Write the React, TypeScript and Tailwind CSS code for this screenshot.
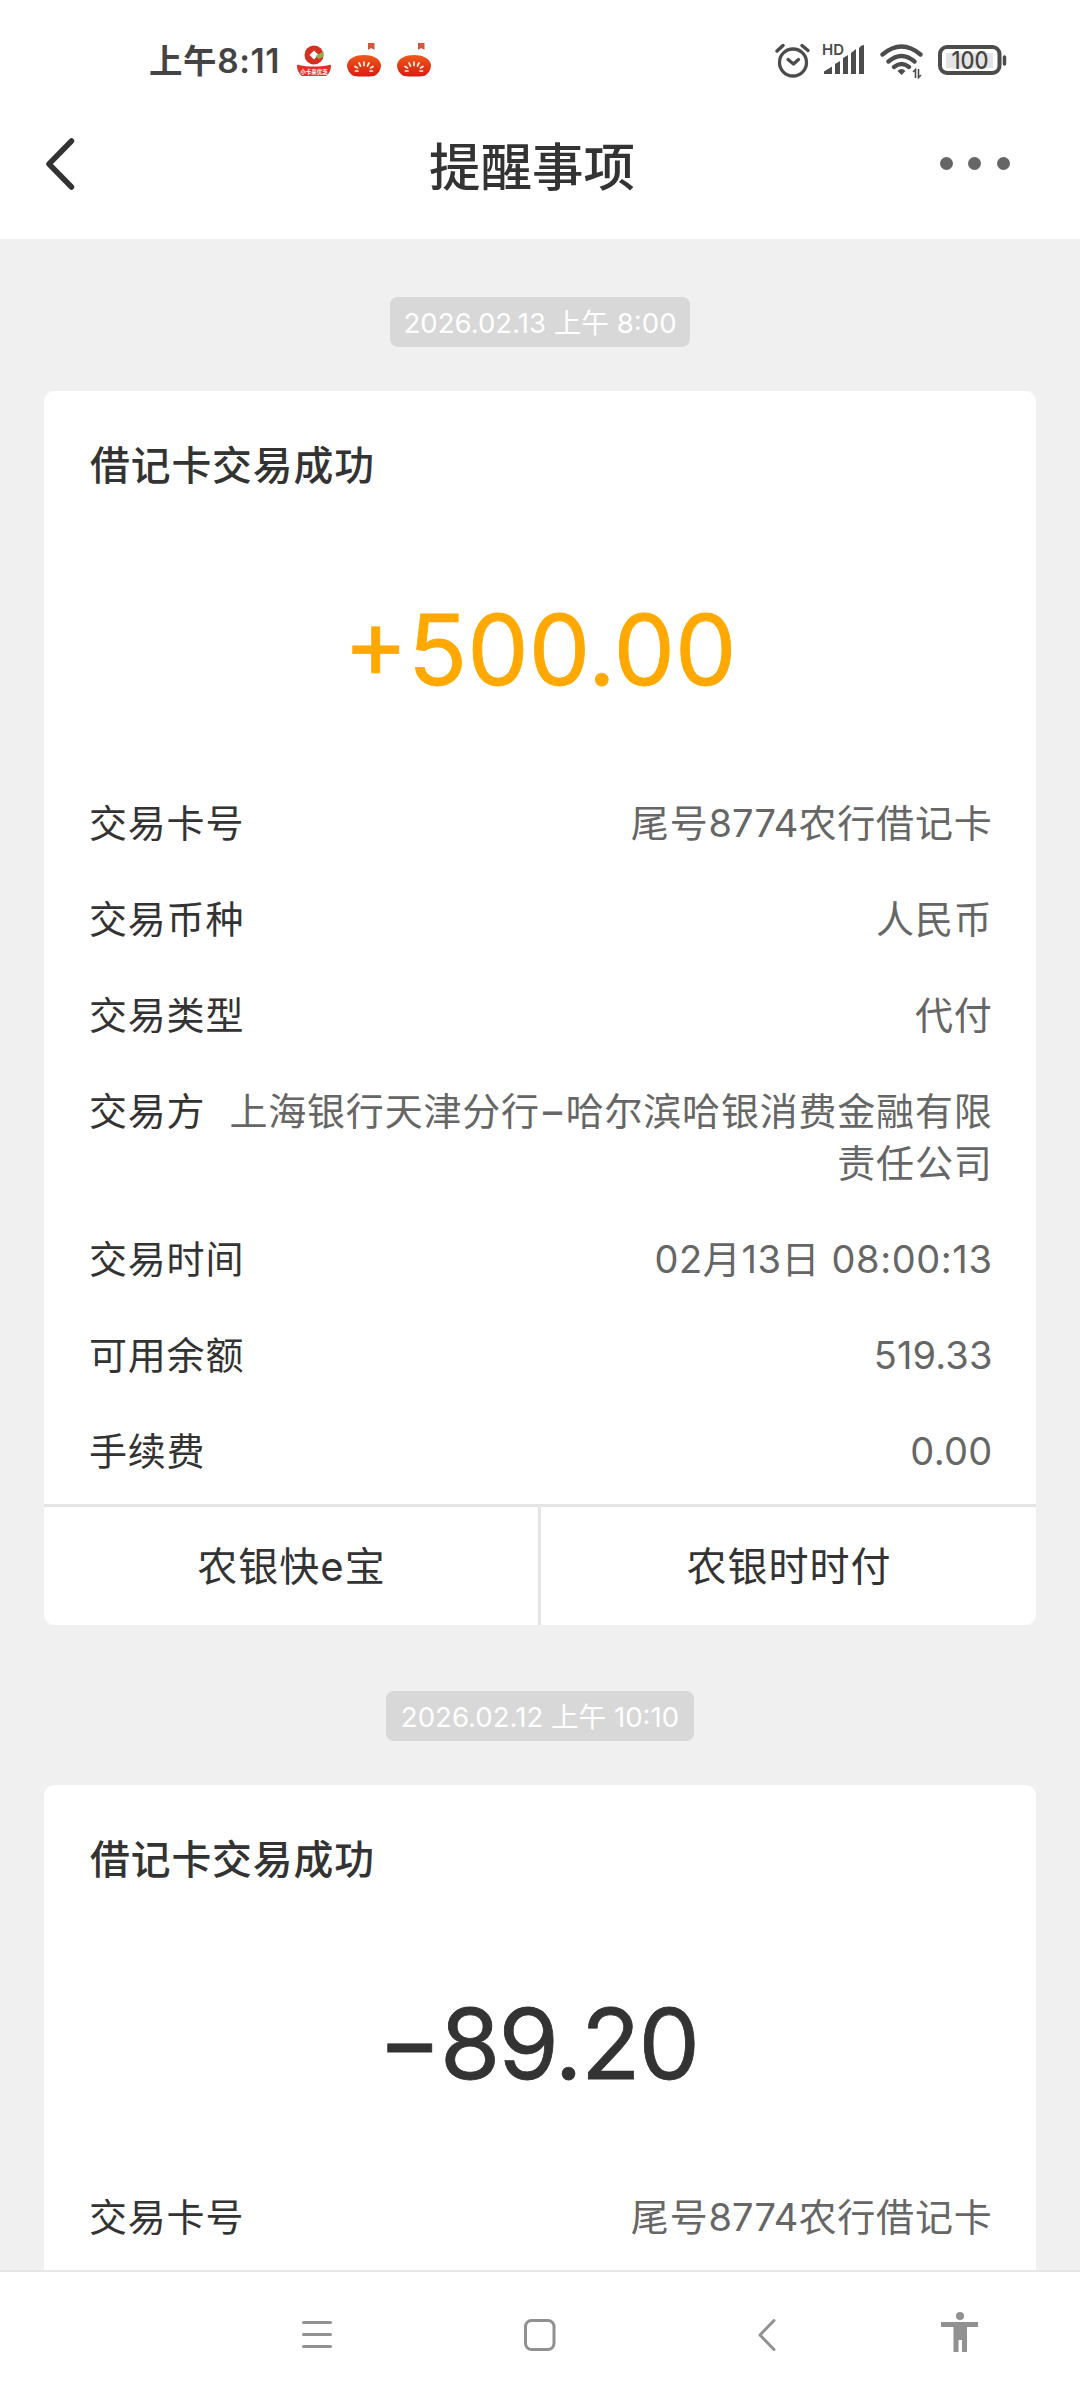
import React from 'react';

type Row = { label: string; value: React.ReactNode };

function Pill({ children, width }: { children: string; width: string }) {
  return (
    <div className={`mx-auto flex h-[50px] items-center justify-center rounded-[8px] bg-[#d8d8d8] pt-[3px] text-[27.6px] leading-none whitespace-pre text-white ${width}`}>
      {children}
    </div>
  );
}

function Card({ amount, amountClass, rows, actions }: { amount: React.ReactNode; amountClass: string; rows: Row[]; actions: string[] }) {
  return (
    <section className="mx-[44px] flex flex-col overflow-hidden rounded-[10px] bg-white text-[#333]">
      <h2 className="px-[46px] pt-[45px] text-[39.8px] leading-[60px] font-medium tracking-[0.9px]">借记卡交易成功</h2>
      <div className={amountClass}>{amount}</div>
      <dl className="flex flex-col gap-[44px] pr-[43.5px] pb-[27px] pl-[45px] text-[38px] leading-[52px] tracking-[0.8px]">
        {rows.map((r) => (
          <div key={r.label} className="flex justify-between gap-[16px]">
            <dt className="shrink-0">{r.label}</dt>
            <dd className="text-right text-[#666]">{r.value}</dd>
          </div>
        ))}
      </dl>
      <div className="grid h-[121px] grid-cols-[497px_495px] border-t-[3px] border-[#e5e5e5] text-[40px] tracking-[1px]">
        {actions.map((a, i) => (
          <button key={a} className={i === 0 ? 'border-r-[3px] border-[#e5e5e5] pt-[2px] pl-px' : 'pt-[2px] pl-px'}>
            {a}
          </button>
        ))}
      </div>
    </section>
  );
}

function TomatoIcon() {
  return (
    <svg width="36" height="36" viewBox="0 0 36 36">
      <defs>
        <linearGradient id="tomato" x1="0" y1="0" x2="0" y2="1">
          <stop offset="0" stopColor="#ee5a1c" />
          <stop offset="1" stopColor="#d91c12" />
        </linearGradient>
      </defs>
      <path d="M22 0h6.500v7l-3.300-2-3.200 2z" fill="#d2583c" />
      <path d="M1 22C2 15 10 12 18 12s16 3 17 10c0 5-3 9-7 11-6 .8-14 .8-20 0-4-2-7-6-7-11z" fill="url(#tomato)" />
      <g stroke="#fff3dc" strokeWidth="1.700" strokeLinecap="round">
        <path d="M18 19v3.500M13 20l1.500 3M23 20l-1.500 3M9 23.500l2.500 1.500M27 23.500L24.500 25M9.500 28h2.500M24 28h2.500" />
      </g>
    </svg>
  );
}

function BankIcon() {
  return (
    <svg width="36" height="36" viewBox="0 0 36 36">
      <circle cx="18" cy="12" r="9.500" fill="#d4301f" />
      <path d="M18 7.500l4.500 4.500-4.500 4.500-4.500-4.500z" fill="#fff" />
      <path d="M19.500 13l8-4.500v5l-4.500 2.500z" fill="#8fb04a" />
      <path d="M1 23c0-1.500 1-1.500 2-1 8 2 22 2 30 0 1-.5 2-.5 2 1 0 4-2 8-5 10H6c-3-2-5-6-5-10z" fill="#e02f28" />
      <text x="18" y="31" fontSize="5.500" fontWeight="700" textAnchor="middle" fill="#fff">小卡来优惠</text>
    </svg>
  );
}

function StatusBar() {
  return (
    <div className="flex h-[122px] items-center pr-[73px] pl-[149px] text-[#444]">
      <span className="text-[33.5px] font-semibold tracking-[0.6px]">上午8:11</span>
      <div className="ml-[16px] flex gap-[14px]">
        <BankIcon />
        <TomatoIcon />
        <TomatoIcon />
      </div>
      <svg className="ml-auto" width="234" height="40" viewBox="0 0 234 40" fill="none" stroke="#4c4c4c">
        <circle cx="20" cy="21.500" r="13.500" strokeWidth="3.300" />
        <path d="M15 18.500l5.500 4.500 5-4.500" strokeWidth="3.300" strokeLinecap="round" strokeLinejoin="round" />
        <path d="M4 10l6-5.500M35 9.500l-6-5" strokeWidth="3.500" strokeLinecap="round" />
        <text x="49" y="14" fontSize="15" fontWeight="600" fill="#4c4c4c" stroke="none">HD</text>
        <g fill="#4c4c4c" stroke="none">
          <path d="M51 33v-2.500l8-5V33zM62 33V23l5-3v13zM70 33V17l5-3v19zM78 33V12l5-4v25zM86 33V7q2-3 5-3v29z" />
          <path d="M124.500 30q4-4 8 0l-4 4z" />
        </g>
        <path d="M109.500 13.500q19-16 38 0M115.500 20.500q13-11 26 0M121 26q7.500-6 15 0" strokeWidth="4.300" strokeLinecap="round" />
        <path d="M140 31l2.500-2.500V37M148 34l-2.500 2.500V28" strokeWidth="1.600" />
        <rect x="173" y="12" width="47" height="15" fill="#e4e4e4" stroke="none" />
        <rect x="167" y="6" width="59.500" height="26" rx="7" strokeWidth="4" />
        <path d="M231.500 16v7" strokeWidth="3.500" strokeLinecap="round" />
        <text x="178.500" y="28" fontSize="24" fontWeight="500" textLength="37" lengthAdjust="spacingAndGlyphs" fill="#444" stroke="none">100</text>
      </svg>
    </div>
  );
}

export default function App() {
  const cardRow: Row = {
    label: '交易卡号',
    value: <>尾号<span className="tracking-[0.1px]">8774</span>农行借记卡</>,
  };
  const rows: Row[] = [
    cardRow,
    { label: '交易币种', value: '人民币' },
    { label: '交易类型', value: '代付' },
    {
      label: '交易方',
      value: <>上海银行天津分行<span className="px-[3px] text-[38px] leading-none font-medium">–</span>哈尔滨哈银消费金融有限责任公司</>,
    },
    { label: '交易时间', value: <span className="tracking-[0.6px]">02月13日 08:00:13</span> },
    { label: '可用余额', value: <span className="tracking-[0.1px]">519.33</span> },
    { label: '手续费', value: <span className="tracking-[0.3px]">0.00</span> },
  ];

  return (
    <div className="flex h-[2400px] w-[1080px] flex-col overflow-hidden bg-[#f0f0f0] font-[Inter,'Noto_Sans_CJK_SC',sans-serif]">
      <div className="shrink-0 bg-white">
        <StatusBar />
        <header className="flex h-[117px] items-start justify-between pr-[70px] pl-[43px] text-[#333]">
          <svg className="mt-[15px]" width="36" height="56" viewBox="0 0 36 56" fill="none" stroke="#333" strokeWidth="5.500">
            <path d="M28.500 4L6 27l22.500 23" strokeLinecap="round" strokeLinejoin="round" />
          </svg>
          <h1 className="pt-px pl-[45px] text-[51.500px] leading-[88px] font-medium">提醒事项</h1>
          <div className="mt-[35px] flex gap-[15.500px]">
            <i className="size-[13px] rounded-full bg-[#666]" />
            <i className="size-[13px] rounded-full bg-[#666]" />
            <i className="size-[13px] rounded-full bg-[#666]" />
          </div>
        </header>
      </div>

      <main className="flex min-h-0 flex-1 flex-col overflow-hidden pt-[58px] [&>*]:shrink-0">
        <Pill width="w-[300px]">2026.02.13 上午 8:00</Pill>
        <div className="h-[44px]" />
        <Card
          amount="+500.00"
          amountClass="mt-[88px] mb-[81px] h-[132px] text-center text-[97.500px] leading-[132px] text-[#ffa900] [-webkit-text-stroke:0.8px_#ffa900]"
          rows={rows}
          actions={['农银快e宝', '农银时时付']}
        />
        <div className="h-[66px]" />
        <Pill width="w-[308px]">2026.02.12 上午 10:10</Pill>
        <div className="h-[44px]" />
        <Card
          amount={<><span className="mr-[10px] align-[4px] text-[88px] leading-none font-medium">–</span>89.20</>}
          amountClass="mt-[88px] mb-[81px] h-[132px] pl-[6px] text-center text-[97.500px] leading-[132px] tracking-[-1.8px] text-[#333] [-webkit-text-stroke:0.8px_#333]"
          rows={[cardRow]}
          actions={[]}
        />
      </main>

      <nav className="h-[130px] shrink-0 border-t-2 border-[#e6e6e6] bg-white">
        <div className="flex h-[126px] items-center pl-[296px] text-[#919191]">
          <svg width="42" height="48" viewBox="0 0 42 48" fill="none" stroke="currentColor" strokeWidth="3" strokeLinecap="round">
            <path d="M7.500 11.500h27M7.500 23.500h27M7.500 35.500h27" />
          </svg>
          <svg className="ml-[181px]" width="42" height="48" viewBox="0 0 42 48" fill="none" stroke="currentColor" strokeWidth="3">
            <rect x="6.500" y="9.500" width="28.500" height="29" rx="6" />
          </svg>
          <svg className="ml-[190px]" width="42" height="48" viewBox="0 0 42 48" fill="none" stroke="currentColor" strokeWidth="3" strokeLinecap="round" strokeLinejoin="round">
            <path d="M23 9.500L9 24l14 14.500" />
          </svg>
          <svg className="ml-[144px]" width="48" height="48" viewBox="0 0 48 48" fill="currentColor">
            <circle cx="23" cy="5" r="4" />
            <path d="M4 11h37v5H30v25h-5V29h-3.500v12h-5V16H4z" />
          </svg>
        </div>
      </nav>
    </div>
  );
}
